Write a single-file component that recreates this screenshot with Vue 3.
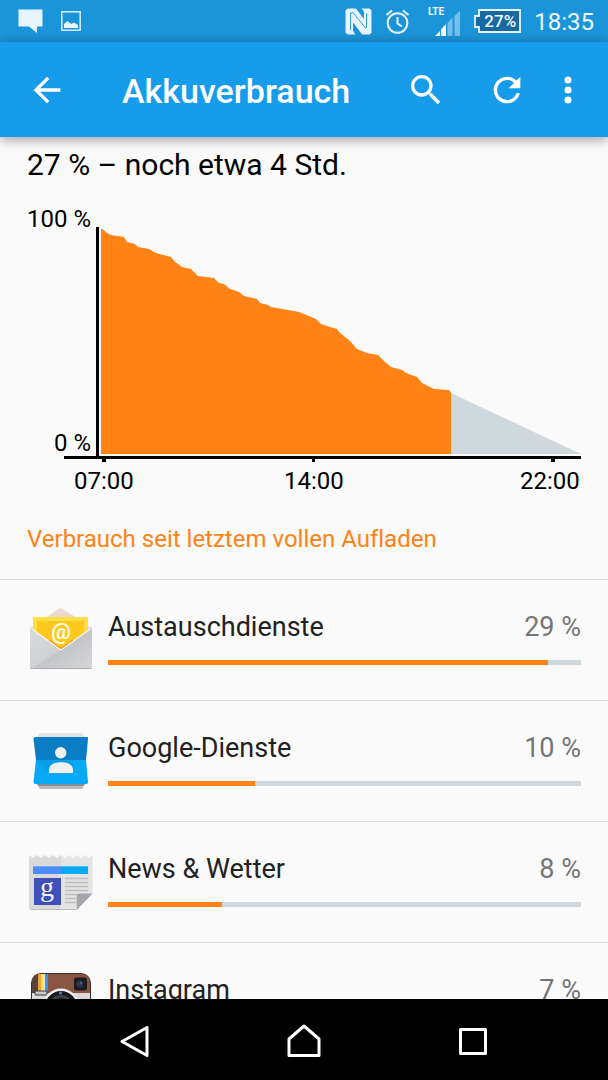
<template>
    <div class="screen">
        <div class="status-bar">
            <div class="status-group notifications">
                <svg class="icon-message" viewBox="0 0 25 25" aria-hidden="true">
                    <path d="M0.500 0.500H24.500V17.500H19V24L11 17.500H0.500Z" fill="#e8f4fc" />
                </svg>
                <svg class="icon-picture" viewBox="0 0 20 20" aria-hidden="true">
                    <rect x="0.800" y="0.800" width="18.400" height="18.400" fill="none" stroke="#d9edfa" stroke-width="1.500" />
                    <path d="M3 17V13L6.500 10L10 13L13 11.500L17 14V17Z" fill="#e8f4fc" />
                </svg>
            </div>
            <div class="status-group">
                <svg class="icon-nfc" viewBox="0 0 27 27" aria-hidden="true">
                    <path d="M2.500 0.500H24.500L26.500 2.500V24.500L24.500 26.500H2.500L0.500 24.500V2.500Z" fill="#e8f4fc" />
                    <path d="M10.500 0L19 11V4L16.500 0Z" fill="#1b95da" />
                    <path d="M8 14.500V22.500L10.500 27H17.500Z" fill="#1b95da" />
                    <path d="M5.500 22V5L8 4.500L20.500 20L21.500 19.500V5" fill="none" stroke="#1b95da" stroke-width="0.900" />
                </svg>
                <svg class="icon-alarm" viewBox="0 0 25 25" aria-hidden="true">
                    <g fill="none" stroke="#e8f4fc" stroke-width="2">
                        <circle cx="12.500" cy="14" r="9.800" />
                        <path d="M12.500 8V14.500L17 17.500" />
                        <path d="M1.500 6L7 1.500M23.500 6L18 1.500" />
                    </g>
                </svg>
                <svg class="icon-signal" viewBox="0 0 33 29" aria-hidden="true">
                    <text x="0" y="8">LTE</text>
                    <path d="M7 29L12 24V29Z" fill="#f2f9fd" />
                    <path d="M13 29V22.500L18 17V29Z" fill="#f2f9fd" />
                    <path d="M19.500 29V16L24.500 10.500V29Z" fill="#76bfe9" />
                    <path d="M26.500 29V9L32 3.500V29Z" fill="#76bfe9" />
                </svg>
                <div class="battery">
                    <svg viewBox="0 0 47 24" aria-hidden="true">
                        <path d="M5 1H46V23H5V18H1V7H5Z" fill="#1769a0" stroke="#e8f4fc" stroke-width="1.800" />
                    </svg>
                    <span class="battery-value">27%</span>
                </div>
                <span class="clock">18:35</span>
            </div>
        </div>

        <header class="app-bar">
            <button class="icon-btn" aria-label="Zurück">
                <svg viewBox="0 0 24 24"><path d="M20 11H7.830l5.590-5.590L12 4l-8 8 8 8 1.410-1.410L7.830 13H20v-2z" /></svg>
            </button>
            <h1>Akkuverbrauch</h1>
            <button class="icon-btn search-btn" aria-label="Suchen">
                <svg viewBox="0 0 24 24"><path d="M15.500 14h-.79l-.28-.27A6.471 6.471 0 0 0 16 9.500 6.500 6.500 0 1 0 9.500 16c1.610 0 3.090-.59 4.230-1.570l.27.28v.79l5 4.990L20.490 19l-4.990-5zm-6 0C7.010 14 5 11.990 5 9.500S7.010 5 9.500 5 14 7.010 14 9.500 11.990 14 9.500 14z" /></svg>
            </button>
            <button class="icon-btn" aria-label="Aktualisieren">
                <svg viewBox="0 0 24 24"><path d="M17.650 6.350A7.958 7.958 0 0 0 12 4a8 8 0 1 0 7.730 10h-2.080A5.990 5.990 0 0 1 12 18a6 6 0 1 1 0-12c1.660 0 3.140.69 4.220 1.780L13 11h7V4l-2.350 2.350z" /></svg>
            </button>
            <button class="icon-btn more-btn" aria-label="Weitere Optionen">
                <svg viewBox="0 0 24 24">
                    <circle cx="12" cy="6" r="2.100" />
                    <circle cx="12" cy="12" r="2.100" />
                    <circle cx="12" cy="18" r="2.100" />
                </svg>
            </button>
        </header>

        <main class="content">
            <h2 class="summary">27 % – noch etwa 4 Std.</h2>

            <!-- Battery history -->
            <div class="chart">
                <div class="y-labels">
                    <span>100 %</span>
                    <span>0 %</span>
                </div>
                <svg class="plot" viewBox="0 0 485 232" preserveAspectRatio="none" role="img" aria-label="Akkuverlauf">
                    <polygon points="355,227 355,166 485,227" fill="#cfd8dc" />
                    <polygon :points="historyArea" fill="#ff8215" />
                    <path d="M0 0H3V229H485V232H-32V229H0Z" />
                    <path d="M6 232H10V235H6ZM216 232H219V235H216ZM455 232H459V235H455Z" />
                </svg>
                <div class="x-labels">
                    <span v-for="time in times" :key="time">{{ time }}</span>
                </div>
            </div>

            <h3 class="section-title">Verbrauch seit letztem vollen Aufladen</h3>

            <ul class="usage-list">
                <li v-for="app in apps" :key="app.id" class="usage-row">
                    <svg v-if="app.id === 'mail'" class="app-icon" viewBox="0 0 68 68" aria-hidden="true">
                        <defs>
                            <linearGradient id="mailBody" x1="0" y1="0" x2="1" y2="1">
                                <stop offset="0" stop-color="#d9dbdc" />
                                <stop offset="0.500" stop-color="#cfd1d3" />
                                <stop offset="0.520" stop-color="#c3c5c8" />
                                <stop offset="1" stop-color="#d5d6d8" />
                            </linearGradient>
                        </defs>
                        <path d="M33.700 2L3 22V61H65V22Z" fill="#e3e1df" />
                        <path d="M33.700 2L18 12H50Z" fill="#ead9ce" />
                        <rect x="6" y="11" width="55" height="34" fill="#fddf45" />
                        <rect x="10" y="15" width="47" height="30" fill="#ffc81c" />
                        <path d="M10 33L34 45L57 33V45H10Z" fill="#ffae1f" />
                        <text class="mail-glyph" x="34" y="33">@</text>
                        <path d="M3 23.500Q3 22 5 23L34 44L63 23Q65 22 65 23.500V61Q65 63 63 63H5Q3 63 3 61Z" fill="url(#mailBody)" />
                        <path d="M5 23L34 44L63 23" fill="none" stroke="#f4f4f4" stroke-width="1.200" />
                        <path d="M22 34L34 42.500L46 34" fill="none" stroke="#f58a23" stroke-width="1" />
                        <path d="M3.500 62.500H64.500" stroke="#a9abad" stroke-width="1" />
                    </svg>

                    <svg v-else-if="app.id === 'google'" class="app-icon" viewBox="0 0 68 68" aria-hidden="true">
                        <path d="M13 6H55L59 12H9Z" fill="#e2e2e2" />
                        <path d="M9 56H59L55 62H13Z" fill="#b9bcc1" />
                        <path d="M8 55H60L56 59H12Z" fill="#8a8f96" />
                        <path d="M8 10H60Q61.500 10 61 12L59 33H9L6.500 12Q6.500 10 8 10Z" fill="#0b7dc4" />
                        <path d="M9 33H59L61 55Q61 57 59.500 57H8Q6.500 57 6.500 55Z" fill="#08a9f4" />
                        <path d="M9 33H46V46H22L9 33Z" fill="#0aa0e8" />
                        <circle cx="33.700" cy="25.700" r="5.700" fill="#f1f1f1" />
                        <path d="M22 46V43C22 38 27 35.300 34 35.300S46 38 46 43V46Z" fill="#f1f1f1" />
                    </svg>

                    <svg v-else-if="app.id === 'news'" class="app-icon" viewBox="0 0 68 68" aria-hidden="true">
                        <path d="M2 7L6 10L10 7L14 10L18 7L22 10L26 7L30 10L34 7V62H5Q2 62 2 59Z" fill="#dadada" />
                        <path d="M34 7L38 10L42 7L46 10L50 7L54 10L58 7L62 10L65.500 7V45.500L49.700 62H34Z" fill="#e4e4e4" />
                        <path d="M3 61.500H49.700" stroke="#bdbdbd" stroke-width="1" />
                        <rect x="6" y="18.300" width="28" height="7.700" fill="#4a8df6" />
                        <rect x="34" y="18.300" width="27" height="7.700" fill="#05a9f4" />
                        <rect x="7" y="30" width="27" height="27" fill="#3f51b8" />
                        <text class="news-glyph" x="20" y="48">g</text>
                        <path d="M38 30.500H61M38 34.500H61M38 38.500H61M38 42.500H61M38 46.500H50M38 50.500H49M38 54.500H49" stroke="#bcbcbc" stroke-width="1.400" />
                        <path d="M49.700 62V48Q49.700 45.500 52.500 45.500H65.500Z" fill="#a3a6ac" />
                    </svg>

                    <svg v-else class="app-icon" viewBox="0 0 68 68" aria-hidden="true">
                        <rect x="4" y="4" width="60" height="60" rx="10" fill="#3a2f2b" />
                        <path d="M5 24V14Q5 5 14 5H54Q63 5 63 14V24Z" fill="#8a5442" />
                        <path d="M5 24H63V54Q63 63 54 63H14Q5 63 5 54Z" fill="#d9d9d9" />
                        <path d="M5 24V14Q5 7 11 5V24Z" fill="#55423a" />
                        <rect x="11" y="5" width="3" height="17" fill="#f0a23c" />
                        <rect x="14" y="5" width="3" height="17" fill="#fbe257" />
                        <rect x="17" y="5" width="1" height="17" fill="#e8e8e8" />
                        <rect x="18" y="5" width="3" height="17" fill="#3f94d8" />
                        <rect x="8" y="22" width="12" height="4" rx="1" fill="#c9c9c9" stroke="#3b3b3b" stroke-width="1" />
                        <rect x="47" y="8.500" width="13" height="13" rx="2" fill="#191b20" />
                        <circle cx="53" cy="15" r="3.500" fill="#30343f" />
                        <circle cx="54" cy="14" r="1.300" fill="#4252a5" />
                        <circle cx="34" cy="38" r="18.500" fill="#f0f0f0" />
                        <circle cx="34" cy="38" r="16" fill="#191a1c" />
                        <circle cx="34" cy="38" r="12" fill="#3e4349" />
                        <circle cx="34" cy="38" r="9" fill="#15171b" />
                        <circle cx="33.500" cy="24" r="1.600" fill="#4c80c8" />
                    </svg>

                    <div class="usage-info">
                        <div class="usage-text">
                            <span :id="`name-${app.id}`" class="usage-name">{{ app.name }}</span>
                            <span class="usage-value">{{ app.percent }} %</span>
                        </div>
                        <div
                            class="usage-track"
                            role="progressbar"
                            :aria-labelledby="`name-${app.id}`"
                            :aria-valuenow="app.percent"
                        >
                            <div class="usage-fill" :style="{ width: app.bar + '%' }"></div>
                        </div>
                    </div>
                </li>
            </ul>
        </main>

        <nav class="nav-bar">
            <button aria-label="Zurück">
                <svg viewBox="0 0 36 36"><path d="M30 4.500V32.500L5 18.500Z" /></svg>
            </button>
            <button aria-label="Startseite">
                <svg viewBox="0 0 36 36"><path d="M18 3L33 16V32.500H3V16Z" /></svg>
            </button>
            <button aria-label="Letzte Apps">
                <svg viewBox="0 0 36 36"><path d="M5.500 6.500H30.500V30.500H5.500Z" /></svg>
            </button>
        </nav>
    </div>
</template>

<script setup>
import { ref, computed } from 'vue';

const times = ['07:00', '14:00', '22:00'];

const apps = ref([
    { id: 'mail', name: 'Austauschdienste', percent: 29, bar: 93 },
    { id: 'google', name: 'Google-Dienste', percent: 10, bar: 31 },
    { id: 'news', name: 'News & Wetter', percent: 8, bar: 24 },
    { id: 'instagram', name: 'Instagram', percent: 7, bar: 21 },
]);

// [x, y] in plot units, y grows downwards
const history = [
    [5, 1], [11, 6], [15, 8], [28, 10], [31, 15], [39, 17], [42, 20], [53, 22],
    [60, 26], [75, 30], [79, 35], [82, 37], [86, 40], [95, 42], [102, 49],
    [118, 51], [123, 56], [128, 57], [134, 62], [143, 65], [148, 69], [161, 72],
    [164, 76], [172, 78], [175, 80], [203, 85], [220, 92], [225, 97], [234, 100],
    [241, 102], [243, 105], [254, 114], [261, 122], [271, 126], [282, 128],
    [289, 135], [295, 140], [306, 143], [310, 146], [321, 150], [326, 156],
    [338, 162], [353, 163], [355, 166],
];

const historyArea = computed(() => {
    return [[5, 227], ...history, [355, 227]].map((p) => p.join(',')).join(' ');
});
</script>

<style>
body {
    margin: 0;
    background: #fafafa;
}
</style>

<style scoped>
.screen {
    display: flex;
    flex-direction: column;
    height: 100vh;
    overflow: hidden;
    background: #fafafa;
    color: #000;
    font-family: Roboto, "Noto Sans", sans-serif;
}

button {
    display: flex;
    align-items: center;
    justify-content: center;
    padding: 0;
    border: none;
    background: none;
    cursor: pointer;
}

h1,
h2,
h3 {
    margin: 0;
    font-weight: 400;
}

.status-bar {
    display: flex;
    flex: none;
    align-items: center;
    justify-content: space-between;
    height: 42px;
    padding: 0 14px 0 18px;
    background: #1b95da;
    color: #f0f8fd;
}

.status-group {
    display: flex;
    align-items: center;
    gap: 13px;
}

.notifications {
    gap: 18px;
}

.icon-message,
.icon-alarm {
    width: 25px;
    height: 25px;
}

.icon-picture {
    width: 20px;
    height: 20px;
}

.icon-nfc {
    width: 27px;
    height: 27px;
}

.icon-signal {
    width: 33px;
    height: 29px;
    margin-left: 5px;
    overflow: visible;
}

.icon-signal text {
    fill: #f2f9fd;
    font-size: 10px;
    font-weight: 700;
}

.battery {
    display: grid;
    align-items: center;
    width: 47px;
}

.battery svg,
.battery-value {
    grid-area: 1 / 1;
}

.battery-value {
    padding-left: 5px;
    font-size: 17px;
    font-weight: 500;
    line-height: 24px;
    text-align: center;
}

.clock {
    padding-top: 2px;
    font-size: 24px;
    line-height: 28px;
}

.app-bar {
    position: relative;
    z-index: 1;
    display: flex;
    flex: none;
    align-items: center;
    height: 95px;
    padding: 0 20px 0 27px;
    box-sizing: border-box;
    background: #169ceb;
    box-shadow: 0 2px 12px rgba(0, 0, 0, 0.4);
    color: #fff;
}

.app-bar h1 {
    flex: 1;
    padding: 3px 0 0 55px;
    font-size: 34px;
    font-weight: 500;
    line-height: 40px;
}

.icon-btn svg {
    width: 40px;
    height: 40px;
    fill: #fff;
}

.search-btn {
    margin-right: 41px;
}

.more-btn {
    margin-left: 21px;
}

.content {
    flex: 1;
    min-height: 0;
    padding-top: 10px;
    overflow-y: auto;
    scrollbar-width: none;
}

.summary {
    padding: 0 27px;
    font-size: 30px;
    line-height: 36px;
}

.chart {
    display: grid;
    grid-template-columns: 64px 1fr;
    column-gap: 5px;
    margin: 22px 27px 0;
    font-size: 24px;
    line-height: 28px;
}

.y-labels {
    display: flex;
    flex-direction: column;
    justify-content: space-between;
    align-items: flex-end;
    padding-bottom: 2px;
    white-space: nowrap;
}

.plot {
    width: 100%;
    height: 232px;
    margin-top: 22px;
    overflow: visible;
}

.x-labels {
    display: grid;
    grid-column: 1 / -1;
    grid-template-columns: 210fr 236fr 61px;
    margin-top: 8px;
    padding-left: 47px;
}

.section-title {
    padding: 28px 27px 24px;
    color: #ff8215;
    font-size: 24px;
    font-variant-ligatures: none;
    line-height: 32px;
}

.usage-list {
    margin: 0;
    padding: 0;
    list-style: none;
}

.usage-row {
    display: flex;
    gap: 13px;
    padding: 26px 27px;
    border-top: 1px solid #dfdfdf;
}

.app-icon {
    flex: none;
    width: 68px;
    height: 68px;
}

.mail-glyph {
    fill: #fffbe8;
    font-size: 22px;
    font-weight: 700;
    text-anchor: middle;
}

.news-glyph {
    fill: #f2f2f2;
    font-family: "Liberation Serif", serif;
    font-size: 28px;
    text-anchor: middle;
}

.usage-info {
    flex: 1;
    min-width: 0;
    padding-top: 3px;
}

.usage-text {
    display: flex;
    justify-content: space-between;
    font-size: 27px;
    line-height: 36px;
}

.usage-name {
    color: #212121;
}

.usage-value {
    color: #757575;
}

.usage-track {
    height: 5px;
    margin-top: 15px;
    background: #cfd8dc;
}

.usage-fill {
    height: 100%;
    background: #ff8215;
}

.nav-bar {
    display: grid;
    flex: none;
    grid-template-columns: repeat(3, 1fr);
    height: 81px;
    padding: 2px 51px 0;
    box-sizing: border-box;
    background: #000;
}

.nav-bar svg {
    width: 36px;
    height: 36px;
    fill: none;
    stroke: #fff;
    stroke-width: 3;
    stroke-linejoin: round;
}
</style>
